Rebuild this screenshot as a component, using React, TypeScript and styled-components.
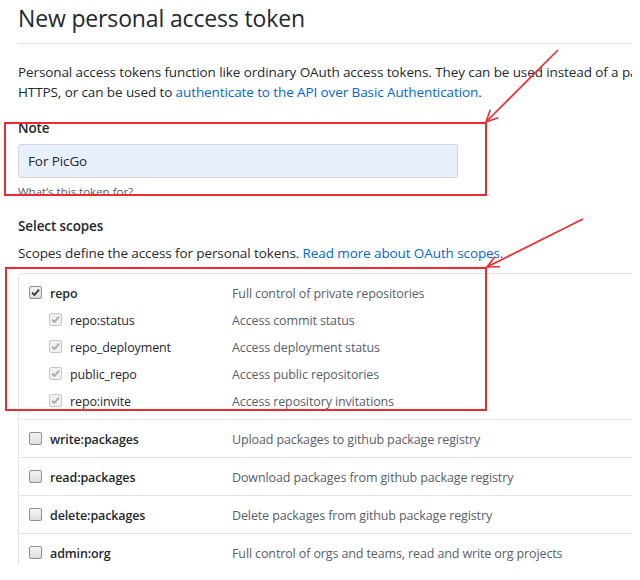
import React from "react";
import styled, { createGlobalStyle } from "styled-components";

const Global = createGlobalStyle`
  html, body { margin: 0; padding: 0; background: #fff; }
  body { font-family: "Open Sans", "Noto Sans", Arial, sans-serif; color: #24292e; overflow: hidden; }
  * { box-sizing: border-box; }
`;

const Frame = styled.div`
  position: relative;
  width: 632px;
  height: 565px;
  overflow: hidden;
  background: #fff;
`;

const Page = styled.div`
  width: 900px;
  padding: 3px 0 0 18px;
  font-size: 13.5px;
  letter-spacing: -0.1px;
  line-height: 20px;
`;

const Title = styled.h1`
  margin: 0;
  font-size: 23px;
  letter-spacing: -0.15px;
  line-height: 30px;
  font-weight: 400;
  color: #24292e;
  padding-bottom: 10px;
  border-bottom: 1px solid #e1e4e8;
`;

const Para = styled.p`
  margin: 18px 0 0;
  color: #24292e;
`;

const Link = styled.a`
  color: #0366d6;
  text-decoration: none;
`;

const FieldLabel = styled.div<{ $top: number }>`
  margin-top: ${(p) => p.$top}px;
  font-weight: 600;
`;

const Input = styled.div`
  margin-top: 6px;
  width: 440px;
  height: 34px;
  border: 1px solid #d1d5da;
  border-radius: 3px;
  background: #e8f0fe;
  padding: 0 9px;
  display: flex;
  align-items: center;
`;

const Hint = styled.div`
  margin-top: 5px;
  font-size: 11.5px;
  letter-spacing: 0;
  line-height: 18px;
  color: #586069;
`;

const ScopeDesc = styled.p`
  margin: 7px 0 0;
`;

const Table = styled.div`
  margin-top: 10px;
  border-left: 1px solid #e1e4e8;
  border-top-left-radius: 4px;
  font-size: 12.5px;
  letter-spacing: -0.12px;
`;

const Group = styled.div`
  border-top: 1px solid #e1e4e8;
  padding: 6px 0 4px;
  &:first-child { border-top-left-radius: 4px; }
`;

const Row = styled.div<{ $sub?: boolean }>`
  display: grid;
  grid-template-columns: ${(p) => (p.$sub ? "183px" : "203px")} 1fr;
  height: 27px;
  align-items: center;
  padding-left: ${(p) => (p.$sub ? 30 : 10)}px;
`;

const Name = styled.label<{ $bold?: boolean }>`
  display: flex;
  align-items: center;
  gap: 8px;
  color: #24292e;
  font-weight: ${(p) => (p.$bold ? 600 : 400)};
`;

const Desc = styled.span`
  color: #586069;
`;

const Box = styled.span<{ $disabled?: boolean }>`
  width: 13px;
  height: 13px;
  flex: none;
  margin-top: -2px;
  border: 1px solid ${(p) => (p.$disabled ? "#c8c8c8" : "#8f8f8f")};
  border-radius: 2px;
  background: ${(p) =>
    p.$disabled ? "#f0f0f0" : "linear-gradient(#f4f4f4, #dedede)"};
  display: flex;
  align-items: center;
  justify-content: center;
`;

const Overlay = styled.svg`
  position: absolute;
  left: 0;
  top: 0;
  pointer-events: none;
`;

function Check({ checked, disabled }: { checked?: boolean; disabled?: boolean }) {
  return (
    <Box $disabled={disabled}>
      {checked && (
        <svg width="9" height="9" viewBox="0 0 9 9">
          <path
            d="M1 4.6 L3.4 7 L8 1.6"
            fill="none"
            stroke={disabled ? "#a8a8a8" : "#333"}
            strokeWidth="1.8"
          />
        </svg>
      )}
    </Box>
  );
}

type Scope = { name: string; desc: string; checked?: boolean; subs?: { name: string; desc: string }[] };

const scopes: Scope[] = [
  {
    name: "repo",
    desc: "Full control of private repositories",
    checked: true,
    subs: [
      { name: "repo:status", desc: "Access commit status" },
      { name: "repo_deployment", desc: "Access deployment status" },
      { name: "public_repo", desc: "Access public repositories" },
      { name: "repo:invite", desc: "Access repository invitations" },
    ],
  },
  { name: "write:packages", desc: "Upload packages to github package registry" },
  { name: "read:packages", desc: "Download packages from github package registry" },
  { name: "delete:packages", desc: "Delete packages from github package registry" },
  { name: "admin:org", desc: "Full control of orgs and teams, read and write org projects" },
];

function arrowHead(tx: number, ty: number, fx: number, fy: number, len = 13, ang = 0.45) {
  const a = Math.atan2(fy - ty, fx - tx);
  const p1 = [tx + len * Math.cos(a + ang), ty + len * Math.sin(a + ang)];
  const p2 = [tx + len * Math.cos(a - ang), ty + len * Math.sin(a - ang)];
  return `M${p1[0]} ${p1[1]} L${tx} ${ty} L${p2[0]} ${p2[1]}`;
}

const RED = "#ee2a30";

export default function App() {
  return (
    <Frame>
      <Global />
      <Page>
        <Title>New personal access token</Title>
        <Para>
          Personal access tokens function like ordinary OAuth access tokens. They can be used instead of a password for Git over
          <br />
          HTTPS, or can be used to <Link href="#">authenticate to the API over Basic Authentication</Link>.
        </Para>
        <FieldLabel $top={16}>Note</FieldLabel>
        <Input>For PicGo</Input>
        <Hint>What’s this token for?</Hint>
        <FieldLabel $top={15}>Select scopes</FieldLabel>
        <ScopeDesc>
          Scopes define the access for personal tokens. <Link href="#">Read more about OAuth scopes.</Link>
        </ScopeDesc>
        <Table>
          {scopes.map((s) => (
            <Group key={s.name}>
              <Row>
                <Name $bold>
                  <Check checked={s.checked} />
                  {s.name}
                </Name>
                <Desc>{s.desc}</Desc>
              </Row>
              {s.subs?.map((sub) => (
                <Row $sub key={sub.name}>
                  <Name>
                    <Check checked disabled />
                    {sub.name}
                  </Name>
                  <Desc>{sub.desc}</Desc>
                </Row>
              ))}
            </Group>
          ))}
        </Table>
      </Page>
      <Overlay width="632" height="565">
        <rect x="5" y="123" width="481" height="72" fill="none" stroke={RED} strokeWidth="2" />
        <rect x="6" y="268" width="480" height="142" fill="none" stroke={RED} strokeWidth="2" />
        <line x1="558" y1="50" x2="486" y2="122" stroke={RED} strokeWidth="1.6" />
        <path d={arrowHead(486, 122, 558, 50)} fill="none" stroke={RED} strokeWidth="1.6" />
        <line x1="583" y1="219" x2="487" y2="267" stroke={RED} strokeWidth="1.6" />
        <path d={arrowHead(487, 267, 583, 219)} fill="none" stroke={RED} strokeWidth="1.6" />
      </Overlay>
    </Frame>
  );
}
